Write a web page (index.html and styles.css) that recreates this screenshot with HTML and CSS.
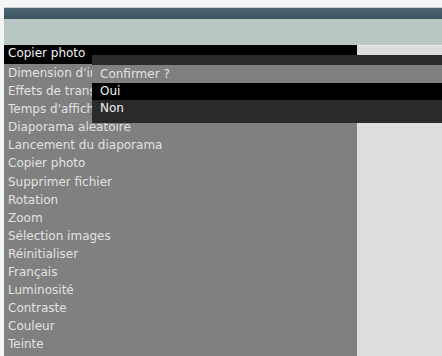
FILE: index.html
```html
<!DOCTYPE html>
<html lang="fr">
<head>
    <meta charset="UTF-8">
    <title>Diaporama</title>
    <link rel="stylesheet" href="styles.css">
</head>
<body>
    <div class="app">
        <div class="titlebar"></div>
        <div class="toolbar"></div>

        <div class="main">
            <!-- Menu list -->
            <div class="menu">
                <div class="menu-head">Copier photo</div>
                <ul class="menu-list">
                    <li class="cut">Dimension d'im</li>
                    <li class="cut">Effets de trans</li>
                    <li class="cut">Temps d'affich</li>
                    <li>Diaporama aléatoire</li>
                    <li>Lancement du diaporama</li>
                    <li>Copier photo</li>
                    <li>Supprimer fichier</li>
                    <li>Rotation</li>
                    <li>Zoom</li>
                    <li>Sélection images</li>
                    <li>Réinitialiser</li>
                    <li>Français</li>
                    <li>Luminosité</li>
                    <li>Contraste</li>
                    <li>Couleur</li>
                    <li>Teinte</li>
                </ul>
            </div>
            <div class="side"></div>

            <!-- Confirm dialog -->
            <div class="dialog">
                <div class="dialog-top"></div>
                <div class="dialog-title">Confirmer ?</div>
                <div class="dialog-option selected">Oui</div>
                <div class="dialog-option last">Non</div>
            </div>
        </div>
    </div>
</body>
</html>
```

FILE: styles.css
```css
body {
    margin: 0;
    background-color: #f3f6f6;
    font-family: "DejaVu Sans", Verdana, sans-serif;
    font-size: 12px;
    overflow: hidden;
}
.app {
    margin-left: 4px;
    padding-top: 7px;
}
.titlebar {
    height: 11px;
    border-top: 1px solid #c9d3d3;
    background: linear-gradient(#4c6674, #3b5562);
}
.toolbar {
    height: 26px;
    background-color: #b8c6c4;
}
.main {
    position: relative;
    display: flex;
    height: 320px;
}
.menu {
    width: 353px;
    background-color: #808080;
}
.side {
    flex: 1;
    background-color: #dddddd;
    border-top: 1px solid #ebebeb;
}
.menu-head {
    height: 19px;
    line-height: 17px;
    padding-left: 4px;
    background-color: #000;
    color: #f0f0f0;
}
.menu-list {
    list-style: none;
    margin: 0;
    padding: 0;
}
.menu-list li {
    height: 18.1px;
    line-height: 18px;
    padding-left: 4px;
    color: #e2e2e2;
    white-space: nowrap;
}
.menu-list li.cut {
    width: 84px;
    overflow: hidden;
}
.dialog {
    position: absolute;
    left: 88px;
    top: 10px;
    right: 0;
}
.dialog-top {
    height: 10px;
    background-color: #2a2a2a;
}
.dialog-title {
    height: 18px;
    line-height: 18px;
    padding-left: 8px;
    background-color: #7f7f7f;
    color: #e2e2e2;
}
.dialog-option {
    height: 17px;
    line-height: 17px;
    padding-left: 8px;
    background-color: #2a2a2a;
    color: #f2f2f2;
}
.dialog-option.selected {
    background-color: #000;
}
.dialog-option.last {
    height: 23px;
    line-height: 16px;
}
```
